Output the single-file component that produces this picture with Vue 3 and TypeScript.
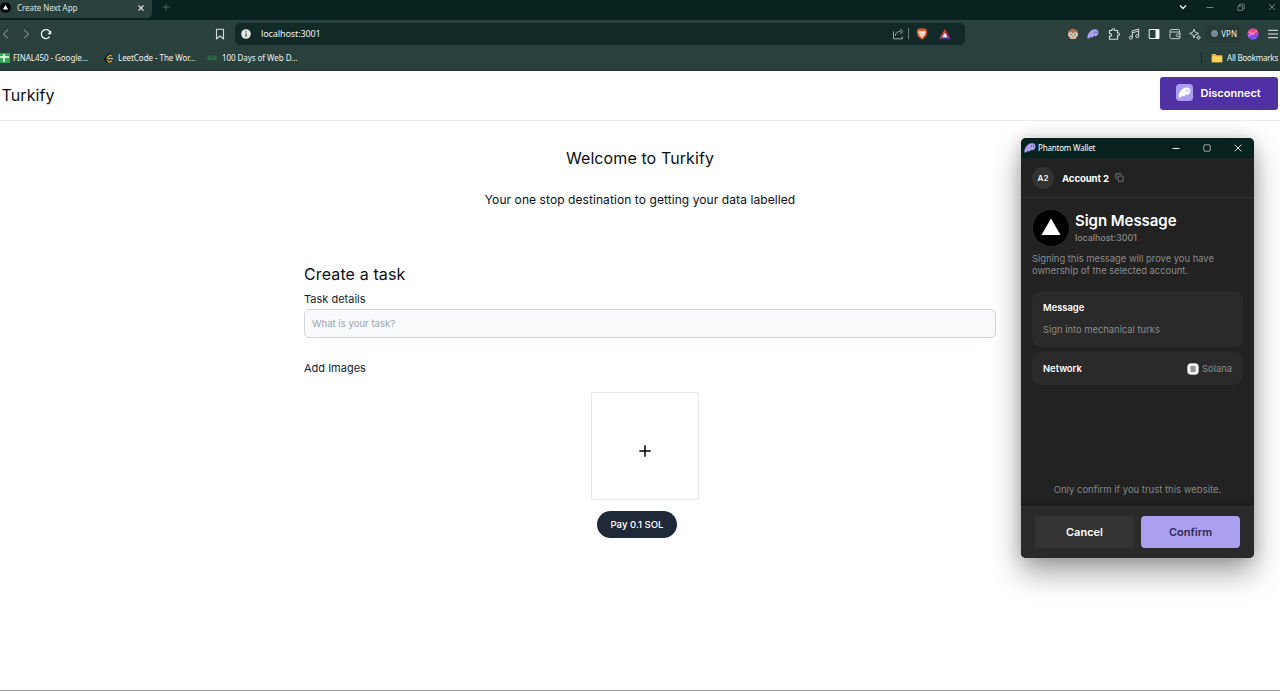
<script setup lang="ts">
import { ref } from 'vue'

interface Bookmark {
  label: string
  icon: 'sheet' | 'leet' | 'geek'
}

const bookmarks: Bookmark[] = [
  { label: 'FINAL450 - Google...', icon: 'sheet' },
  { label: 'LeetCode - The Wor...', icon: 'leet' },
  { label: '100 Days of Web D...', icon: 'geek' },
]

const task = ref('')

const ghost =
  'M.5 13.500C1 8.500 5 2.500 11 2.200c3.600-.2 5.500 2 5.300 4.800-.2 3-2.400 5.200-4.600 5.200-1 0-1.500-.4-1.500-1-.8 1.600-2.200 2.800-3.500 2.800-.8 0-1.300-.4-1.400-1C4.400 14.400 3.200 15.500 2 15.500c-1 0-1.600-.8-1.500-2z'
</script>

<template>
  <div class="screen">
    <header class="browser">
      <div class="tabs">
        <div class="tab">
          <svg class="fav" viewBox="0 0 12 12"><circle cx="6" cy="6" r="5.800" fill="#000" /><path d="M6 3.200 9 8.300H3z" fill="#fff" /></svg>
          <span class="tab-title">Create Next App</span>
          <svg class="tab-close" viewBox="0 0 8 8"><path d="M1.500 1.500l5 5M6.500 1.500l-5 5" stroke="#dfe6e4" stroke-width="1.100" /></svg>
        </div>
        <svg class="tab-plus" viewBox="0 0 8 8"><path d="M4 .5v7M.5 4h7" stroke="#4d625f" stroke-width="1" /></svg>
        <div class="window-controls">
          <svg viewBox="0 0 10 10"><path d="M2 3.500 5 6.500 8 3.500" fill="none" stroke="#eef2f1" stroke-width="1.400" /></svg>
          <svg viewBox="0 0 10 10"><path d="M1.500 5.500h7" stroke="#71817e" /></svg>
          <svg viewBox="0 0 10 10"><path d="M2 4h4.500v4.500H2zM3.500 4V2.200h4.800V7H6.500" fill="none" stroke="#71817e" stroke-width=".9" /></svg>
          <svg viewBox="0 0 10 10"><path d="M2 2l6 6M8 2L2 8" stroke="#71817e" stroke-width="1" /></svg>
        </div>
      </div>

      <div class="toolbar">
        <svg class="nav back" viewBox="0 0 12 12"><path d="M8 1.500 3.500 6 8 10.500" fill="none" stroke="#71837f" stroke-width="1.100" /></svg>
        <svg class="nav forward" viewBox="0 0 12 12"><path d="M4 1.500 8.500 6 4 10.500" fill="none" stroke="#71837f" stroke-width="1.100" /></svg>
        <svg class="nav reload" viewBox="0 0 12 12"><path d="M9.600 8.600A4.500 4.500 0 1 1 10 4.200" fill="none" stroke="#f2f5f4" stroke-width="1.300" /><path d="M11.200 2.200v4H7.400z" fill="#f2f5f4" /></svg>
        <svg class="nav mark" viewBox="0 0 12 12"><path d="M2.500 1.200h7v9.800L6 8 2.500 11z" fill="none" stroke="#d5dcda" stroke-width="1.100" stroke-linejoin="round" /></svg>
        <div class="address">
          <svg class="info" viewBox="0 0 10 10"><circle cx="5" cy="5" r="4.800" fill="#e3e9e7" /><path d="M5 4.400v3.300M5 2.200v1.200" stroke="#1d3330" stroke-width="1.100" /></svg>
          <span class="url">localhost:3001</span>
          <svg class="share" viewBox="0 0 12 12"><path d="M1.500 3.500v7.300h8.800V8.500M3.300 8c.2-3 2-4.600 5.500-4.600M8 1l3 2.500L8 6" fill="none" stroke="#9eaaa7" stroke-width="1" /></svg>
          <i class="address-rule"></i>
          <svg class="brave" viewBox="0 0 12 12"><path d="M2.800.5h6.400l2 2-.8 5.500L6 11.800 1.600 8 .8 2.500z" fill="#e9572c" /><path d="M3 3l3 .6L9 3l.6 1.500L8 7.500 6 10 4 7.500 2.400 4.500z" fill="#fff" /><path d="M3.600 4.700l1.500.6M8.400 4.700l-1.500.6M6 5v2M5 7.500l1 .8 1-.8" stroke="#e9572c" stroke-width=".6" fill="none" /></svg>
          <svg class="bat" viewBox="0 0 12 12"><path d="M6 .8 0 11.200 6 7.500z" fill="#e5492b" /><path d="M6 .8 12 11.200 6 7.500z" fill="#a02a73" /><path d="M0 11.200h12L8 8H4z" fill="#5e3a9b" /><path d="M6 4.800 8.600 9.200H3.400z" fill="#fff" /></svg>
        </div>
        <div class="extensions">
          <svg viewBox="0 0 12 12"><circle cx="6" cy="6" r="5.300" fill="#ac7156" /><path d="M2.500 8.500h7L8.300 11H3.700z" fill="#dcb8a3" /><circle cx="3.600" cy="6.500" r="2.200" fill="#e9e0da" /><circle cx="8.400" cy="6.500" r="2.200" fill="#e9e0da" /><circle cx="3.800" cy="6.500" r="1" fill="#3e8a95" /><circle cx="8.200" cy="6.500" r="1" fill="#3e8a95" /></svg>
          <svg viewBox="0 1 17 16"><path :d="ghost" fill="#ab9ff2" /><path d="M10.700 5.500v2M13.300 5.500v2" stroke="#4e4684" stroke-width="1.300" /></svg>
          <svg viewBox="0 0 12 12"><path d="M1.500 2.500H4C3.600 1.200 4.400.8 5.300.8s1.700.5 1.300 1.700h3v2.700c1-.4 1.800.2 1.800 1.100s-.8 1.500-1.800 1.100v3.800H1.500V8.100c1.300.5 2-.2 2-1.200s-.7-1.600-2-1.200z" fill="none" stroke="#d5dcda" stroke-width="1.100" stroke-linejoin="round" /></svg>
          <svg viewBox="0 0 12 12"><path d="M4.300 9.500V2.800L10.700 1v7M4.300 4.800 10.700 3" fill="none" stroke="#d5dcda" stroke-width="1" /><circle cx="2.900" cy="9.600" r="1.500" fill="none" stroke="#d5dcda" /><circle cx="9.300" cy="8.200" r="1.500" fill="none" stroke="#d5dcda" /></svg>
          <svg viewBox="0 0 12 12"><path d="M1.200 1.500h9.800v9H1.200z" fill="none" stroke="#e9eeec" stroke-width="1" /><path d="M7.500 1.500H11v9H7.500z" fill="#f4f7f6" /></svg>
          <svg viewBox="0 0 12 12"><path d="M10.500 4V2.600c0-.8-.4-1.100-1.100-1.100H2.200c-.7 0-1.200.4-1.200 1.100v7c0 .7.5 1.100 1.200 1.100h7.800c.6 0 1-.4 1-1V5c0-.7-.4-1-1-1H1M11 6H8.200c-1.500 0-1.500 2.600 0 2.600H11" fill="none" stroke="#c6cfcc" stroke-width="1" /></svg>
          <svg viewBox="0 0 12 12"><path d="M5 1.200l1.100 3 3.500 1.200-3.500 1.400L5 10 3.800 6.800.6 5.400l3.200-1.200zM9.500 7.500l.5 1.400 1.500.6-1.500.6-.5 1.500-.6-1.500-1.400-.6 1.400-.6z" fill="none" stroke="#d5dcda" stroke-width=".9" stroke-linejoin="round" /></svg>
          <div class="vpn"><i></i><span>VPN</span></div>
          <svg viewBox="0 0 12 12"><circle cx="6" cy="6" r="5.600" fill="#c43ddb" /><path d="M.6 5A5.600 5.600 0 0 1 11 3.500L7 6.500z" fill="#ef4b86" /><path d="M.8 8A5.600 5.600 0 0 0 11.400 7.200L7 7z" fill="#7c4df0" /><path d="M1.200 8.200 10 2.800M2 4l5 2.500" stroke="#f7c9e6" stroke-width=".7" /></svg>
          <svg viewBox="0 0 12 12"><path d="M1 2.300h10M1 6h10M1 9.700h10" stroke="#e3e9e7" stroke-width="1" /></svg>
        </div>
      </div>

      <div class="bookmarks">
        <div v-for="b in bookmarks" :key="b.label" class="bookmark" :class="b.icon">
          <svg v-if="b.icon === 'sheet'" viewBox="0 0 10 10"><rect width="10" height="10" rx="1" fill="#35a853" /><path d="M4 1v8M0 4h9" stroke="#fff" stroke-width="1.500" /></svg>
          <svg v-else-if="b.icon === 'leet'" viewBox="0 0 10 10"><path d="M6.200.2 1.500 5 1 7l3 2.500" fill="none" stroke="#0b0f0e" stroke-width="1.500" /><path d="M7.700 3.200 6 2 2.500 5.300M3 7.200l1.500 1.500c.6.500 1.500.5 2 0L7.700 7.600" fill="none" stroke="#eca02c" stroke-width="1.200" /><path d="M4 5.600h5" stroke="#b9bfbd" stroke-width="1.100" /></svg>
          <svg v-else viewBox="0 0 10 10"><path d="M4.300 3.600C2.800 2.300.7 3.200.7 5s2.200 2.700 3.800 1.200V5H.8M5.700 3.600C7.200 2.300 9.300 3.200 9.300 5S7.100 7.700 5.500 6.200V5h3.700" fill="none" stroke="#2c7c48" stroke-width="1" /></svg>
          <span>{{ b.label }}</span>
        </div>
        <i class="bookmark-rule"></i>
        <div class="bookmark all">
          <svg viewBox="0 0 12 10"><path d="M.8 1h3.700l1.200 1.300h5.500V9.200H.8z" fill="#e9b63c" /><path d="M.8 3.200h10.400v6H.8z" fill="#fbd25c" /></svg>
          <span>All Bookmarks</span>
        </div>
      </div>
    </header>

    <main class="page">
      <nav class="appbar">
        <div class="brand">Turkify</div>
        <button class="disconnect" type="button">
          <svg viewBox="0 0 17 17"><rect width="17" height="17" rx="3.800" fill="#ab9ff2" /><g transform="translate(2.200 1.800) scale(.75)"><path :d="ghost" fill="#fff" /><path d="M10.700 5.500v2M13.300 5.500v2" stroke="#ab9ff2" stroke-width="1.200" /></g></svg>
          <span>Disconnect</span>
        </button>
      </nav>
      <h1 class="welcome">Welcome to Turkify</h1>
      <p class="tagline">Your one stop destination to getting your data labelled</p>
      <section class="form">
        <h2>Create a task</h2>
        <label for="task">Task details</label>
        <input id="task" v-model="task" type="text" placeholder="What is your task?" />
        <div class="images-label">Add Images</div>
        <div class="upload"><svg viewBox="0 0 12 12"><path d="M6 .3v11.400M.3 6h11.400" stroke="#000" stroke-width="1.500" /></svg></div>
        <button class="pay" type="button">Pay 0.1 SOL</button>
      </section>
    </main>

    <aside class="wallet">
      <div class="wallet-title">
        <svg class="wallet-logo" viewBox="0 1 17 16"><path :d="ghost" fill="#ab9ff2" /><path d="M10.700 5.500v2M13.300 5.500v2" stroke="#4e4684" stroke-width="1.300" /></svg>
        <span>Phantom Wallet</span>
        <div class="wallet-controls">
          <svg viewBox="0 0 10 10"><path d="M1.500 5.500h7" stroke="#e6ebea" /></svg>
          <svg viewBox="0 0 10 10"><rect x="1.800" y="1.800" width="6.400" height="6.400" rx="1" fill="none" stroke="#a8b5b2" stroke-width=".9" /></svg>
          <svg viewBox="0 0 10 10"><path d="M1.700 1.700l6.600 6.600M8.300 1.700 1.700 8.300" stroke="#d9e0de" stroke-width="1" /></svg>
        </div>
      </div>
      <div class="account">
        <div class="avatar">A2</div>
        <strong>Account 2</strong>
        <svg viewBox="0 0 10 10"><path d="M3.400 3.400h5.700v5.700H3.400zM1.900 6.500H.9V.9h5.600v1" fill="none" stroke="#858585" stroke-width=".9" /></svg>
      </div>
      <div class="wallet-body">
        <div class="origin">
          <svg viewBox="0 0 38 38"><circle cx="19" cy="19" r="18.500" fill="#000" stroke="#2b2b2b" /><path d="M19 9.500 28.500 26h-19z" fill="#fff" /></svg>
          <div>
            <h3>Sign Message</h3>
            <div class="host">localhost:3001</div>
          </div>
        </div>
        <p class="notice">Signing this message will prove you have<br />ownership of the selected account.</p>
        <div class="card message">
          <strong>Message</strong>
          <span>Sign into mechanical turks</span>
        </div>
        <div class="card network">
          <strong>Network</strong>
          <svg viewBox="0 0 12 12"><rect x=".3" y=".3" width="11.400" height="11.400" rx="4" fill="#f2f2f2" /><path d="M3.800 3.500h5l-.6 1H3.200zM3.200 5.500h5l.6 1h-5zM3.800 7.500h5l-.6 1H3.200z" fill="#333" /></svg>
          <span>Solana</span>
        </div>
        <p class="trust">Only confirm if you trust this website.</p>
      </div>
      <div class="actions">
        <button class="cancel" type="button">Cancel</button>
        <button class="confirm" type="button">Confirm</button>
      </div>
    </aside>
  </div>
</template>

<style>
body {
  margin: 0;
  background: #fff;
  overflow: hidden;
}
</style>

<style scoped>
* {
  box-sizing: border-box;
}
.screen {
  position: relative;
  display: flex;
  flex-direction: column;
  width: 1280px;
  height: 691px;
  overflow: hidden;
  background: #fff;
  border-bottom: 1px solid #9c9999;
  font-family: Inter, 'Liberation Sans', sans-serif;
  color: #0b0f14;
}
svg {
  display: block;
  flex: none;
}
h1,
h2,
h3,
p {
  margin: 0;
  font-weight: 400;
}
button {
  border: 0;
  padding: 0;
  font-family: inherit;
}
span,
strong {
  white-space: nowrap;
}

.browser {
  height: 71px;
  flex: none;
  background: #29403d;
  border-bottom: 1px solid #23302f;
  color: #eef2f1;
  font-family: 'Noto Sans', 'Open Sans', sans-serif;
}
.tabs {
  display: flex;
  height: 20px;
  background: #08231f;
}
.tab {
  display: flex;
  align-items: center;
  width: 152px;
  height: 18px;
  padding-bottom: 3px;
  background: #29403d;
  border-radius: 0 0 5px 0;
}
.fav {
  width: 11px;
  height: 11px;
}
.tab-title {
  margin-left: 6px;
  width: 120px;
  font-size: 8px;
  letter-spacing: -0.06px;
  color: #dbe2e0;
}
.tab-close {
  width: 8px;
  height: 8px;
}
.tab-plus {
  width: 8px;
  height: 8px;
  margin: 3px 0 0 10px;
}
.window-controls {
  display: flex;
  gap: 21px;
  margin: 2px 3px 0 auto;
}
.window-controls svg {
  width: 10px;
  height: 10px;
}
.window-controls svg:first-child {
  margin-right: -4px;
}
.toolbar {
  display: flex;
  align-items: center;
  height: 27px;
}
.nav {
  width: 12px;
  height: 12px;
}
.forward {
  margin-left: 8px;
}
.reload {
  margin-left: 8px;
}
.mark {
  margin-left: 162px;
}
.address {
  display: flex;
  align-items: center;
  width: 730px;
  height: 22px;
  margin-left: 9px;
  padding-left: 6px;
  background: #122a27;
  border-radius: 5px;
}
.info {
  width: 10px;
  height: 10px;
}
.url {
  margin-left: 10px;
  font-size: 9px;
  letter-spacing: -0.1px;
}
.share {
  width: 12px;
  height: 12px;
  margin-left: auto;
}
.address-rule {
  width: 1px;
  height: 11px;
  margin-left: 4px;
  background: #6b7a77;
}
.brave {
  width: 12px;
  height: 12px;
  margin-left: 7px;
}
.bat {
  width: 12px;
  height: 12px;
  margin: 0 14px 0 11px;
}
.extensions {
  display: flex;
  align-items: center;
  gap: 8.350px;
  margin-left: auto;
  margin-right: 1px;
}
.extensions svg {
  width: 12px;
  height: 12px;
}
.vpn {
  display: flex;
  align-items: center;
  gap: 3px;
  width: 36px;
  height: 18px;
  margin: 0 -3px 0 -4px;
  padding-left: 6px;
  border-radius: 5px;
  background: #263b38;
  font-size: 8px;
}
.vpn i {
  width: 7px;
  height: 7px;
  border-radius: 50%;
  background: #7b8491;
  border: 1px solid #8e97a3;
}
.bookmarks {
  display: flex;
  align-items: center;
  height: 22px;
  padding-bottom: 1px;
}
.bookmark {
  display: flex;
  align-items: center;
  gap: 4px;
  font-size: 8px;
  letter-spacing: -0.06px;
}
.bookmark svg {
  width: 10px;
  height: 10px;
}
.bookmark.sheet {
  width: 104px;
  gap: 3px;
}
.bookmark.leet {
  width: 103px;
}
.bookmark.geek {
  gap: 5px;
}
.bookmark-rule {
  width: 1px;
  height: 11px;
  margin: 0 9px 0 auto;
  background: #122724;
}
.bookmark.all {
  margin-right: 2px;
  letter-spacing: -0.22px;
}
.bookmark.all svg {
  width: 12px;
}

.page {
  flex: 1;
  display: flex;
  flex-direction: column;
}
.appbar {
  display: flex;
  align-items: flex-start;
  justify-content: space-between;
  height: 50px;
  padding: 5.500px 2.500px 0 1.500px;
  border-bottom: 1px solid #ececee;
}
.brand {
  padding-top: 8.500px;
  font-size: 16px;
  line-height: 20px;
  letter-spacing: 0.1px;
}
.disconnect {
  display: flex;
  align-items: center;
  width: 117.500px;
  height: 33px;
  padding: 0 0 1px 16px;
  border-radius: 3px;
  background: #4f30a5;
  color: #fff;
  font-size: 11px;
  font-weight: 600;
}
.disconnect svg {
  width: 17px;
  height: 17px;
  margin-right: 7.500px;
}
.welcome {
  margin-top: 27px;
  text-align: center;
  font-size: 16px;
  line-height: 20px;
  letter-spacing: 0.1px;
}
.tagline {
  margin-top: 24px;
  text-align: center;
  font-size: 12px;
  line-height: 16px;
  letter-spacing: 0.08px;
}
.form {
  display: flex;
  flex-direction: column;
  width: 692px;
  margin: 56px 0 0 304px;
}
.form h2 {
  font-size: 16px;
  line-height: 20px;
  letter-spacing: 0.12px;
}
.form label,
.images-label {
  font-size: 11px;
  line-height: 14px;
  color: #15202e;
}
.form label {
  margin-top: 8px;
}
.form input {
  height: 29px;
  margin-top: 3px;
  padding: 0 7px;
  border: 1px solid #d1d5db;
  border-radius: 5px;
  background: #f9fafb;
  font: 9.600px Inter, sans-serif;
  outline: 0;
}
.form input::placeholder {
  color: #9ca3af;
}
.images-label {
  margin-top: 23px;
}
.upload {
  display: flex;
  align-items: center;
  justify-content: center;
  width: 108px;
  height: 108px;
  margin: 17px 0 0 287px;
  padding-top: 10px;
  border: 1px solid #e5e5e7;
  border-radius: 2px;
}
.upload svg {
  width: 12px;
  height: 12px;
}
.pay {
  width: 80px;
  height: 27px;
  margin: 11px 0 0 293px;
  padding-bottom: 1px;
  border-radius: 14px;
  background: #1f2937;
  color: #fff;
  font-size: 9.600px;
  font-weight: 500;
}

.wallet {
  position: absolute;
  left: 1021px;
  top: 138px;
  display: flex;
  flex-direction: column;
  width: 233px;
  height: 420px;
  overflow: hidden;
  border-radius: 5px;
  background: #222;
  box-shadow: 0 15px 30px rgba(0, 0, 0, 0.36), 0 0 16px rgba(0, 0, 0, 0.16);
  color: #fff;
}
.wallet-title {
  display: flex;
  align-items: center;
  height: 20px;
  padding-left: 3px;
  background: #08231f;
  font-family: 'Noto Sans', 'Open Sans', sans-serif;
  font-size: 8px;
  letter-spacing: -0.18px;
}
.wallet-title span {
  padding-bottom: 1px;
}
.wallet-logo {
  width: 12px;
  height: 12px;
  margin-right: 2px;
}
.wallet-controls {
  display: flex;
  gap: 21px;
  margin: 0 11px 0 auto;
}
.wallet-controls svg {
  width: 10px;
  height: 10px;
}
.account {
  display: flex;
  align-items: center;
  height: 40px;
  padding-left: 11px;
  border-bottom: 1px solid #303030;
  font-size: 9.600px;
}
.account strong {
  margin: 1px 6px 0 8px;
  font-weight: 700;
  letter-spacing: -0.1px;
}
.account svg {
  width: 9px;
  height: 9px;
}
.avatar {
  width: 22px;
  height: 22px;
  border-radius: 50%;
  background: #333;
  text-align: center;
  font-size: 8px;
  line-height: 22px;
  font-weight: 600;
}
.wallet-body {
  flex: 1;
  display: flex;
  flex-direction: column;
  padding: 11px 11px 0;
}
.origin {
  display: flex;
  gap: 5px;
}
.origin svg {
  width: 38px;
  height: 38px;
}
.origin h3 {
  margin-top: 2px;
  font-size: 15px;
  line-height: 20px;
  font-weight: 600;
  letter-spacing: -0.05px;
}
.host {
  font-size: 8.900px;
  line-height: 14px;
  font-weight: 500;
  color: #8b8b8b;
}
.notice {
  margin-top: 6px;
  font-size: 9.400px;
  line-height: 11.500px;
  color: #8b8b8b;
}
.card {
  border-radius: 9px;
  background: #2a2a2a;
  padding: 0 11px;
  font-size: 9.400px;
}
.card strong {
  font-weight: 600;
}
.card span {
  color: #8b8b8b;
}
.message {
  display: flex;
  flex-direction: column;
  gap: 10px;
  height: 56px;
  margin-top: 15px;
  padding-top: 11px;
  line-height: 12px;
}
.network {
  display: flex;
  align-items: center;
  height: 33px;
  margin-top: 5px;
}
.network svg {
  width: 12px;
  height: 12px;
  margin: 0 3px 0 auto;
}
.trust {
  margin: auto 0 9px;
  text-align: center;
  font-size: 9.500px;
  line-height: 14px;
  color: #858585;
}
.actions {
  display: flex;
  gap: 7px;
  height: 52px;
  padding: 9px 14px 0;
  border-top: 1px solid #303030;
  background: #2a2a2a;
  box-shadow: 0 -2px 5px rgba(0, 0, 0, 0.25);
}
.actions button {
  flex: 1;
  height: 32px;
  border-radius: 3px;
  font-size: 11px;
  font-weight: 600;
}
.cancel {
  background: #333;
  color: #fff;
}
.actions .confirm {
  border-radius: 4px;
  background: #ab9ff2;
  color: #30284d;
}
</style>
